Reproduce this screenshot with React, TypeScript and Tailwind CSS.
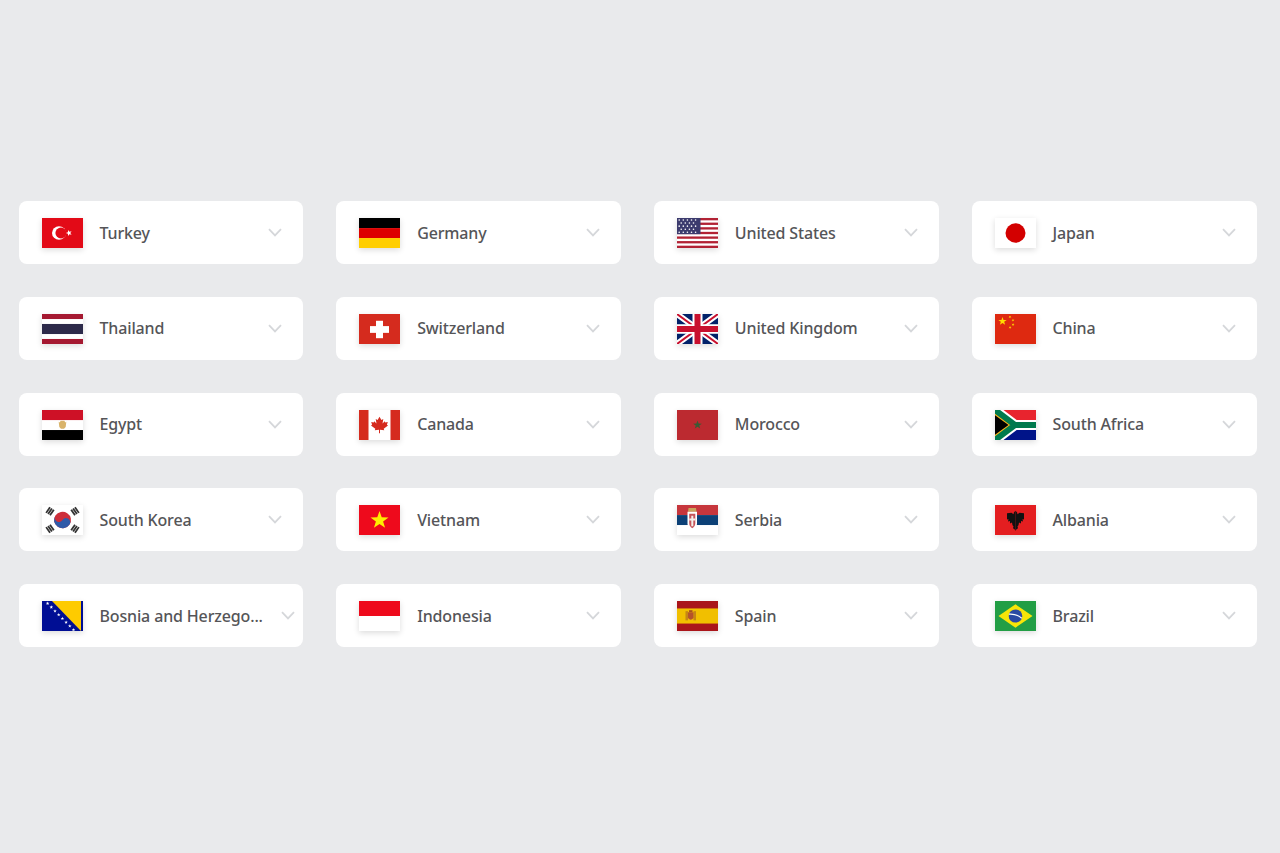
import React from 'react';

// points of a five pointed star, used by most of the flags
const star = (cx: number, cy: number, r: number, rot = -90) => {
  const pts: string[] = [];
  for (let i = 0; i < 10; i++) {
    const rad = i % 2 === 0 ? r : r * 0.4;
    const a = ((rot + i * 36) * Math.PI) / 180;
    pts.push(`${(cx + rad * Math.cos(a)).toFixed(2)},${(cy + rad * Math.sin(a)).toFixed(2)}`);
  }
  return pts.join(' ');
};

const Turkey = () => (
  <>
    <rect width="41" height="31" fill="#e30a17" />
    <circle cx="17" cy="15.5" r="7" fill="#fff" />
    <circle cx="19" cy="15.5" r="5.6" fill="#e30a17" />
    <polygon points={star(27, 15.5, 3.2, 180)} fill="#fff" />
  </>
);

const Germany = () => (
  <>
    <rect width="41" height="10.4" fill="#000" />
    <rect y="10.4" width="41" height="10.3" fill="#dd0000" />
    <rect y="20.7" width="41" height="10.3" fill="#ffce00" />
  </>
);

const UnitedStates = () => {
  const stripes = Array.from({ length: 7 }, (_, i) => i * 2);
  const dots: [number, number][] = [];
  for (let r = 0; r < 5; r++) {
    for (let c = 0; c < (r % 2 ? 4 : 5); c++) {
      dots.push([(r % 2 ? 4.2 : 2.2) + c * 4.1, 2 + r * 3.2]);
    }
  }
  return (
    <>
      <rect width="41" height="31" fill="#fff" />
      {stripes.map((i) => (
        <rect key={i} y={(i * 31) / 13} width="41" height={31 / 13} fill="#b22234" />
      ))}
      <rect width="23.5" height="16.7" fill="#3c3b6e" />
      {dots.map(([x, y]) => (
        <circle key={`${x}-${y}`} cx={x} cy={y} r="0.8" fill="#fff" />
      ))}
    </>
  );
};

const Japan = () => (
  <>
    <rect width="41" height="31" fill="#fff" />
    <circle cx="20.5" cy="15.5" r="10" fill="#d30000" />
  </>
);

const Thailand = () => (
  <>
    <rect width="41" height="31" fill="#fff" />
    <rect width="41" height="5.2" fill="#a51931" />
    <rect y="10.3" width="41" height="10.4" fill="#2d2a4a" />
    <rect y="25.8" width="41" height="5.2" fill="#a51931" />
  </>
);

const Switzerland = () => (
  <>
    <rect width="41" height="31" fill="#d52b1e" />
    <rect x="17" y="7" width="7" height="18" fill="#fff" />
    <rect x="11" y="12.5" width="19" height="7" fill="#fff" />
  </>
);

const UnitedKingdom = () => (
  <>
    <rect width="41" height="31" fill="#012169" />
    <path d="M0 0 41 31M41 0 0 31" stroke="#fff" strokeWidth="6" />
    <path d="M0 0 41 31M41 0 0 31" stroke="#c8102e" strokeWidth="2" />
    <path d="M20.5 0V31M0 15.5H41" stroke="#fff" strokeWidth="10" />
    <path d="M20.5 0V31M0 15.5H41" stroke="#c8102e" strokeWidth="6" />
  </>
);

const China = () => (
  <>
    <rect width="41" height="31" fill="#de2910" />
    <polygon points={star(7.5, 7.5, 4.4)} fill="#ffde00" />
    <polygon points={star(15, 3, 1.5, -60)} fill="#ffde00" />
    <polygon points={star(18, 6.5, 1.5, -30)} fill="#ffde00" />
    <polygon points={star(18, 11, 1.5, 0)} fill="#ffde00" />
    <polygon points={star(15, 14, 1.5, -60)} fill="#ffde00" />
  </>
);

const Egypt = () => (
  <>
    <rect width="41" height="31" fill="#fff" />
    <rect width="41" height="10.4" fill="#ce1126" />
    <rect y="20.7" width="41" height="10.3" fill="#000" />
    <path d="M18.5 11h4l.6 2 1.2-.8-.6 5.3-1.7 2h-3l-1.7-2-.6-5.3 1.2.8z" fill="#d9b36a" />
  </>
);

const Canada = () => (
  <>
    <rect width="41" height="31" fill="#fff" />
    <rect width="9.5" height="31" fill="#d52b1e" />
    <rect x="31.5" width="9.5" height="31" fill="#d52b1e" />
    <path
      d="M20.5 7l-1.9 3.3-1.9-1 .8 4.6-2.3-2.4-.5 1.3-2.5-.5.9 3-1.1.6 4.3 3.5-.5 1.6 4.2-.5V24h1v-3.5l4.2.5-.5-1.6 4.3-3.5-1.1-.6.9-3-2.5.5-.5-1.3-2.3 2.4.8-4.6-1.9 1z"
      fill="#d52b1e"
    />
  </>
);

const Morocco = () => (
  <>
    <rect width="41" height="31" fill="#bc2a30" />
    <polygon points={star(20.5, 15.5, 4.6)} fill="#3b5a34" />
  </>
);

const SouthAfrica = () => (
  <>
    <rect width="41" height="15.5" fill="#e8242e" />
    <rect y="15.5" width="41" height="15.5" fill="#001489" />
    <path d="M0 0 20 15.5 0 31M20 15.5H41" fill="none" stroke="#fff" strokeWidth="10.4" />
    <path d="M0 0 20 15.5 0 31Z" fill="#ffb81c" />
    <path d="M0 0 20 15.5 0 31M20 15.5H41" fill="none" stroke="#007a4d" strokeWidth="6.2" />
    <path d="M0 5.4 13.5 15.5 0 25.6Z" fill="#000" />
  </>
);

const SouthKorea = () => (
  <>
    <rect width="41" height="31" fill="#fff" />
    <g transform="rotate(33.7 20.5 15.5)">
      <circle cx="20.5" cy="15.5" r="8.5" fill="#cd2e3a" />
      <path d="M12 15.5a4.25 4.25 0 0 0 8.5 0 4.25 4.25 0 0 1 8.5 0 8.5 8.5 0 0 1-17 0z" fill="#2f5aa8" />
    </g>
    {[
      [8, 6.5, -56.3],
      [33, 6.5, 56.3],
      [8, 24.5, 56.3],
      [33, 24.5, -56.3],
    ].map(([x, y, r]) => (
      <g key={`${x}-${y}`} transform={`rotate(${r} ${x} ${y})`} fill="#333">
        <rect x={x - 3.5} y={y - 3.2} width="7" height="1.8" />
        <rect x={x - 3.5} y={y - 0.9} width="7" height="1.8" />
        <rect x={x - 3.5} y={y + 1.4} width="7" height="1.8" />
      </g>
    ))}
  </>
);

const Vietnam = () => (
  <>
    <rect width="41" height="31" fill="#ee0a1c" />
    <polygon points={star(20.5, 15.8, 9.5)} fill="#ffed00" />
  </>
);

const Serbia = () => (
  <>
    <rect width="41" height="31" fill="#fff" />
    <rect width="41" height="10.4" fill="#c6363c" />
    <rect y="10.4" width="41" height="10.3" fill="#0c4076" />
    <path d="M11.5 3h7.5l.5 4h-8.5z" fill="#c9a45c" />
    <path d="M10.5 7h9.5v12q0 5.5-4.75 7.5-4.75-2-4.75-7.5z" fill="#fff" />
    <path d="M12.2 9h6.1v9.5q0 3.6-3.05 5.5-3.05-1.9-3.05-5.5z" fill="#c6545a" />
    <path d="M14.3 11h2v3h2v2h-2v6h-2v-6h-2v-2h2z" fill="#f4f0ea" />
  </>
);

// one half of the eagle, mirrored for the other side
const eagleHalf = 'M0 6 1.5 7.5 2 9.5 4 8 8.5 8.5 8.5 15 7 14.5 7.5 17 5.5 16.5 5.5 19 3.5 18 3 21 2 22 2.5 24 1 25 0 26.5Z';

const Albania = () => (
  <>
    <rect width="41" height="31" fill="#e41e20" />
    <g transform="translate(20.5 0)" fill="#111">
      <path d={eagleHalf} />
      <path d={eagleHalf} transform="scale(-1 1)" />
    </g>
  </>
);

const Bosnia = () => {
  const stars = Array.from({ length: 8 }, (_, i) => i);
  return (
    <>
      <rect width="41" height="31" fill="#000e94" />
      <path d="M10 0H39V31z" fill="#fecb00" />
      {stars.map((i) => (
        <polygon key={i} points={star(5.6 + i * 3.7, 2.5 + i * 3.9, 1.9)} fill="#fff" />
      ))}
    </>
  );
};

const Indonesia = () => (
  <>
    <rect width="41" height="31" fill="#fff" />
    <rect width="41" height="15.5" fill="#ee0a1c" />
  </>
);

const Spain = () => (
  <>
    <rect width="41" height="31" fill="#aa151b" />
    <rect y="7.7" width="41" height="15.6" fill="#f1bf00" />
    <rect x="8.5" y="10.5" width="2.5" height="9.5" fill="#b8741a" opacity="0.75" />
    <rect x="16.5" y="10.5" width="2.5" height="9.5" fill="#b8741a" opacity="0.75" />
    <path d="M11 11.5h5.5v6q-2.75 3.5-5.5 0z" fill="#b5542a" />
    <path d="M12 9.5h3.5v2H12z" fill="#a8501f" />
  </>
);

const Brazil = () => (
  <>
    <rect width="41" height="31" fill="#229e45" />
    <path d="M20.5 3.4 37.5 15.5 20.5 27.6 3.5 15.5z" fill="#f8e509" />
    <circle cx="20.5" cy="15.5" r="6.8" fill="#2b49a3" />
    <path d="M14 13.6q7.5-.6 12.8 4.2" fill="none" stroke="#fff" strokeWidth="1.2" />
  </>
);

interface Country {
  name: string;
  Flag: React.FC;
  wide?: boolean;
}

const countries: Country[] = [
  { name: 'Turkey', Flag: Turkey },
  { name: 'Germany', Flag: Germany },
  { name: 'United States', Flag: UnitedStates },
  { name: 'Japan', Flag: Japan },
  { name: 'Thailand', Flag: Thailand },
  { name: 'Switzerland', Flag: Switzerland },
  { name: 'United Kingdom', Flag: UnitedKingdom },
  { name: 'China', Flag: China },
  { name: 'Egypt', Flag: Egypt },
  { name: 'Canada', Flag: Canada },
  { name: 'Morocco', Flag: Morocco },
  { name: 'South Africa', Flag: SouthAfrica },
  { name: 'South Korea', Flag: SouthKorea },
  { name: 'Vietnam', Flag: Vietnam },
  { name: 'Serbia', Flag: Serbia },
  { name: 'Albania', Flag: Albania },
  { name: 'Bosnia and Herzego...', Flag: Bosnia, wide: true },
  { name: 'Indonesia', Flag: Indonesia },
  { name: 'Spain', Flag: Spain },
  { name: 'Brazil', Flag: Brazil },
];

const Chevron = () => (
  <svg width="14" height="9" viewBox="0 0 14 9" fill="none" className="shrink-0">
    <path d="M1 1.2 7 7.4l6-6.2" stroke="#d5d7da" strokeWidth="1.8" />
  </svg>
);

const CountrySelect: React.FC<Country> = ({ name, Flag, wide }) => (
  <div className={`flex h-[63px] items-center justify-between rounded-lg bg-white pl-[23px] ${wide ? 'pr-[8px]' : 'pr-[21px]'}`}>
    <div className="flex min-w-0 items-center gap-[17px]">
      <svg
        width="41"
        height="30"
        viewBox="0 0 41 31"
        preserveAspectRatio="none"
        className="mt-px shrink-0 shadow-[0_2px_6px_rgba(0,0,0,0.14)]"
      >
        <Flag />
      </svg>
      <span className="whitespace-nowrap text-[16px] font-medium tracking-[-0.15px] text-[#555558]">{name}</span>
    </div>
    <Chevron />
  </div>
);

export default function App() {
  return (
    <div className="min-h-[853px] bg-[#e9eaec] pl-[18.5px] pr-[23.5px] pt-[201px] font-['Noto_Sans',sans-serif]">
      <div className="grid grid-cols-4 gap-x-[32.7px] gap-y-[32.8px]">
        {countries.map((c) => (
          <CountrySelect key={c.name} {...c} />
        ))}
      </div>
    </div>
  );
}
